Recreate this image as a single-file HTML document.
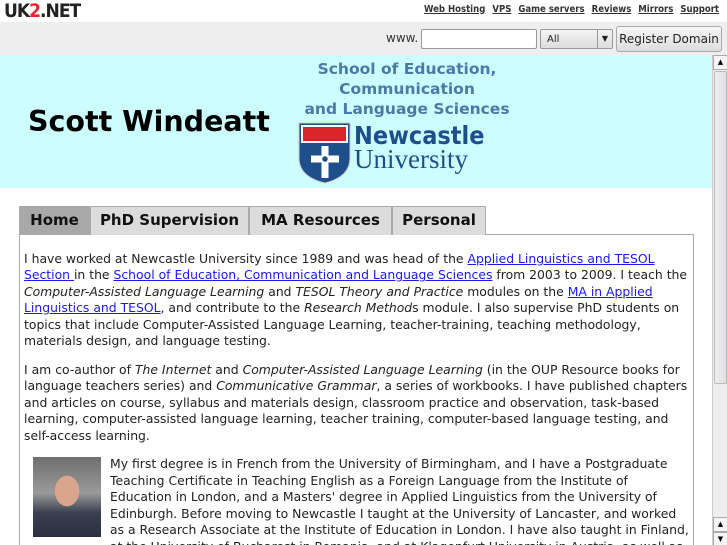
<!DOCTYPE html>
<html><head><style>
*{margin:0;padding:0;box-sizing:border-box}
html,body{width:727px;height:545px;overflow:hidden}
body{background:#fff;font-family:"DejaVu Sans",sans-serif;position:relative}
.top{position:absolute;left:0;top:0;width:727px;height:22px;background:#fff}
.logo{position:absolute;left:4px;top:0;font:bold 19px "DejaVu Sans Condensed","DejaVu Sans",sans-serif;color:#222;letter-spacing:-1px}
.links{position:absolute;right:8px;top:4px;font:bold 9.5px "DejaVu Sans Condensed","DejaVu Sans",sans-serif;color:#333}
.links span{text-decoration:underline;margin-left:7px}
.bar{position:absolute;left:0;top:22px;width:727px;height:33px;background:#eee}
.www{position:absolute;left:386px;top:9px;font-size:12px;color:#333}
.inp{position:absolute;left:421px;top:7px;width:116px;height:20px;background:#fff;border:1px solid #999;border-radius:2px}
.sel{position:absolute;left:540px;top:7px;width:73px;height:20px;background:linear-gradient(#f4f4f4,#ddd);border:1px solid #999;border-radius:2px;font-size:10px;padding:4px 6px;color:#222}
.sel i{position:absolute;right:0;top:0;width:15px;height:18px;border-left:1px solid #999;font-style:normal;font-size:8px;text-align:center;line-height:18px}
.btn{position:absolute;left:616px;top:4px;width:106px;height:26px;background:linear-gradient(#f6f6f6,#ddd);border:1px solid #aaa;border-radius:3px;font-size:12px;line-height:24px;text-align:center;color:#222}
.hdr{position:absolute;left:0;top:55px;width:712px;height:133px;background:#ccfdff}
.name{position:absolute;left:28px;top:50px;font:bold 28.5px "DejaVu Sans",sans-serif;color:#000;white-space:nowrap}
.school{position:absolute;left:298px;top:4px;width:218px;text-align:center;font:bold 15.5px/20px "DejaVu Sans",sans-serif;color:#4a7aa6;white-space:nowrap}
.sb{position:absolute;left:712px;top:55px;width:15px;height:490px;background:#eee;border-left:1px solid #ccc}
.arr{position:absolute;left:0;width:15px;height:15px;background:#f4f4f4;border:1px solid #aaa;font-size:7px;text-align:center;line-height:13px}
.thumb{position:absolute;left:1px;top:16px;width:13px;height:313px;background:linear-gradient(90deg,#eee,#e0e0e4);border:1px solid #bbb;border-radius:2px}
.tabs{position:absolute;left:19px;top:206px;height:29px}
.tab{position:absolute;top:0;height:29px;background:#dcdcdc;border:1px solid #aaa;border-bottom:none;font:bold 15px "DejaVu Sans",sans-serif;line-height:27px;text-align:center;color:#111;white-space:nowrap}
.box{position:absolute;left:19px;top:234px;width:675px;height:311px;border:1px solid #aaa;border-bottom:none;background:#fff}
.txt{position:absolute;left:24px;top:251px;width:668px;height:294px;overflow:hidden;font-size:12.4px;line-height:16.4px;color:#222}
.txt p{margin-bottom:12.5px}
a{color:#1a1aee;text-decoration:underline}
.photo{position:absolute;left:33px;top:457px;width:68px;height:80px;background:radial-gradient(ellipse 20px 25px at 34px 34px,#d9a58c 60%,transparent 62%),linear-gradient(#6f6f6f 0,#9a9a9a 45%,#3a4050 70%,#2a3040 100%)}
</style></head><body>
<div class="top"><div class="logo">UK<span style="color:#e23">2</span>.NET</div>
<div class="links"><span>Web Hosting</span><span>VPS</span><span>Game servers</span><span>Reviews</span><span>Mirrors</span><span>Support</span></div></div>
<div class="bar"><div class="www">www.</div><div class="inp"></div><div class="sel">All<i>▼</i></div><div class="btn">Register Domain</div></div>
<div class="hdr"><div class="name">Scott Windeatt</div>
<div class="school">School of Education,<br>Communication<br>and Language Sciences</div>
<svg style="position:absolute;left:298px;top:67px" width="190" height="62">
<path d="M1 1H52V36Q52 55 27 61Q1 55 1 36Z" fill="#1f4f8a" stroke="#ccc"/>
<rect x="3" y="3" width="47" height="18" fill="#fff"/>
<path d="M5 5h43v14H5z" fill="#d8262c"/>
<path d="M27 24v32M13 37h28" stroke="#fff" stroke-width="7"/>
<circle cx="27" cy="37" r="3.5" fill="#1f4f8a" stroke="#fff" stroke-width="1.5"/>
<text x="56" y="22" font-family="DejaVu Sans Condensed,DejaVu Sans,sans-serif" font-weight="bold" font-size="25" fill="#1f4f8a">Newcastle</text>
<text x="56" y="46" font-family="Liberation Serif,serif" font-size="27" fill="#1f4f8a">University</text>
</svg></div>
<div class="sb"><div class="arr" style="top:0">▲</div><div class="thumb"></div><div class="arr" style="top:462px">▲</div><div class="arr" style="top:477px">▼</div></div>
<div class="box"></div>
<div class="tabs">
<div class="tab" style="left:0;width:71px;background:#a8a8a8">Home</div>
<div class="tab" style="left:71px;width:159px">PhD Supervision</div>
<div class="tab" style="left:230px;width:143px">MA Resources</div>
<div class="tab" style="left:373px;width:94px">Personal</div>
</div>
<div class="txt">
<p>I have worked at Newcastle University since 1989 and was head of the <a>Applied Linguistics and TESOL Section </a> in the <a>School of Education, Communication and Language Sciences</a> from 2003 to 2009. I teach the <i>Computer-Assisted Language Learning</i> and <i>TESOL Theory and Practice</i> modules on the <a>MA in Applied Linguistics and TESOL</a>, and contribute to the <i>Research Method</i>s module. I also supervise PhD students on topics that include Computer-Assisted Language Learning, teacher-training, teaching methodology, materials design, and language testing.</p>
<p>I am co-author of <i>The Internet</i> and <i>Computer-Assisted Language Learning</i> (in the OUP Resource books for language teachers series) and <i>Communicative Grammar</i>, a series of workbooks. I have published chapters and articles on course, syllabus and materials design, classroom practice and observation, task-based learning, computer-assisted language learning, teacher training, computer-based language testing, and self-access learning.</p>
<p style="padding-left:86px">My first degree is in French from the University of Birmingham, and I have a Postgraduate Teaching Certificate in Teaching English as a Foreign Language from the Institute of Education in London, and a Masters' degree in Applied Linguistics from the University of Edinburgh. Before moving to Newcastle I taught at the University of Lancaster, and worked as a Research Associate at the Institute of Education in London. I have also taught in Finland, at the University of Bucharest in Romania, and at Klagenfurt University in Austria, as well as in a</p>
</div>
<div class="photo"></div>
</body></html>
